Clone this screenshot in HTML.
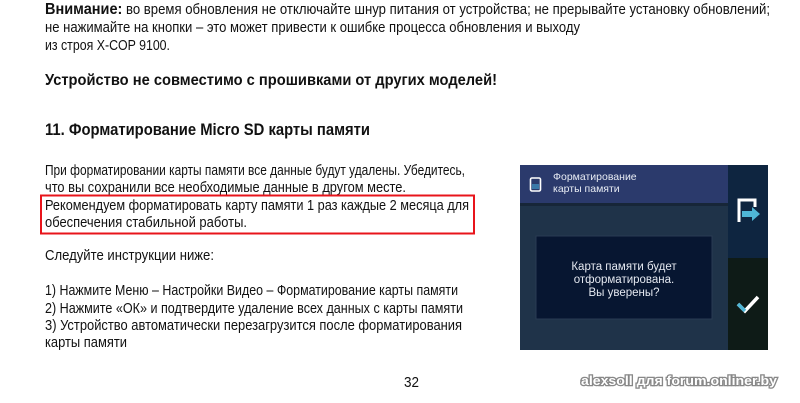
<!DOCTYPE html>
<html><head><meta charset="utf-8"><style>
html,body{margin:0;padding:0;background:#fff;width:800px;height:403px;overflow:hidden}
svg{display:block}
text{font-family:"Liberation Sans",sans-serif;fill:#111}
.n{font-size:14.5px}
.b{font-weight:bold}
</style></head><body>
<svg width="800" height="403" viewBox="0 0 800 403" xmlns="http://www.w3.org/2000/svg">
<text x="45" y="14" class="n" textLength="725" lengthAdjust="spacingAndGlyphs"><tspan font-weight="bold" font-size="16">Внимание:</tspan> во время обновления не отключайте шнур питания от устройства; не прерывайте установку обновлений;</text>
<text x="45" y="32" class="n" textLength="535" lengthAdjust="spacingAndGlyphs">не нажимайте на кнопки – это может привести к ошибке процесса обновления и выходу</text>
<text x="45" y="50" class="n" textLength="125" lengthAdjust="spacingAndGlyphs">из строя X-COP 9100.</text>
<text x="45" y="85" class="b" font-size="16" textLength="452" lengthAdjust="spacingAndGlyphs">Устройство не совместимо с прошивками от других моделей!</text>
<text x="45" y="135" class="b" font-size="16.5" textLength="325" lengthAdjust="spacingAndGlyphs">11. Форматирование Micro SD карты памяти</text>
<text x="45" y="175" class="n" textLength="420" lengthAdjust="spacingAndGlyphs">При форматировании карты памяти все данные будут удалены. Убедитесь,</text>
<text x="45" y="192" class="n" textLength="361" lengthAdjust="spacingAndGlyphs">что вы сохранили все необходимые данные в другом месте.</text>
<text x="45" y="210" class="n" textLength="424" lengthAdjust="spacingAndGlyphs">Рекомендуем форматировать карту памяти 1 раз каждые 2 месяца для</text>
<text x="45" y="227" class="n" textLength="202" lengthAdjust="spacingAndGlyphs">обеспечения стабильной работы.</text>
<rect x="41" y="195.5" width="433" height="38" fill="none" stroke="#e8141b" stroke-width="2"/>
<text x="45" y="260" class="n" textLength="169" lengthAdjust="spacingAndGlyphs">Следуйте инструкции ниже:</text>
<text x="45" y="295" class="n" textLength="413" lengthAdjust="spacingAndGlyphs">1) Нажмите Меню – Настройки Видео – Форматирование карты памяти</text>
<text x="45" y="313" class="n" textLength="418" lengthAdjust="spacingAndGlyphs">2) Нажмите «ОК» и подтвердите удаление всех данных с карты памяти</text>
<text x="45" y="330" class="n" textLength="417" lengthAdjust="spacingAndGlyphs">3) Устройство автоматически перезагрузится после форматирования</text>
<text x="45" y="347" class="n" textLength="82" lengthAdjust="spacingAndGlyphs">карты памяти</text>
<text x="404" y="387" class="n" textLength="15" lengthAdjust="spacingAndGlyphs">32</text>

<rect x="520" y="165" width="248" height="185" fill="#1f3349"/>
<rect x="520" y="165" width="208" height="38" fill="#2b3a6c"/>
<rect x="520" y="203" width="208" height="3" fill="#172638"/>
<rect x="728" y="165" width="40" height="93" fill="#0e2540"/>
<rect x="728" y="258" width="40" height="92" fill="#0e1b17"/>
<rect x="536" y="236" width="176" height="83" fill="#071631" stroke="#2a3b52" stroke-width="1"/>
<rect x="530.5" y="178" width="10" height="13" rx="1.5" fill="none" stroke="#fff" stroke-width="1.6"/>
<rect x="532" y="184" width="7" height="5" fill="#3a78a8"/>
<text x="553" y="180" font-size="10.5" style="fill:#e8ecf4">Форматирование</text>
<text x="553" y="192" font-size="10.5" style="fill:#e8ecf4">карты памяти</text>
<text x="624" y="270" font-size="11.5" text-anchor="middle" style="fill:#e4e8f0">Карта памяти будет</text>
<text x="624" y="283" font-size="11.5" text-anchor="middle" style="fill:#e4e8f0">отформатирована.</text>
<text x="624" y="296" font-size="11.5" text-anchor="middle" style="fill:#e4e8f0">Вы уверены?</text>
<path d="M739 222 V200 H755 V207" fill="none" stroke="#fff" stroke-width="3"/>
<path d="M742 211 H752 V207 L760 214 L752 221 V217 H742 Z" fill="#4fb6d6"/>
<path d="M738 304 L745 311 L758 297" fill="none" stroke="#fff" stroke-width="3.5"/>
<path d="M738 304 L745 311" fill="none" stroke="#4fb6d6" stroke-width="3.5"/>

<text x="581" y="385" font-size="13" font-weight="bold" style="fill:#fff;stroke:#888;stroke-width:2.5;paint-order:stroke" textLength="196" lengthAdjust="spacingAndGlyphs">alexsoll для forum.onliner.by</text>
</svg>
</body></html>
